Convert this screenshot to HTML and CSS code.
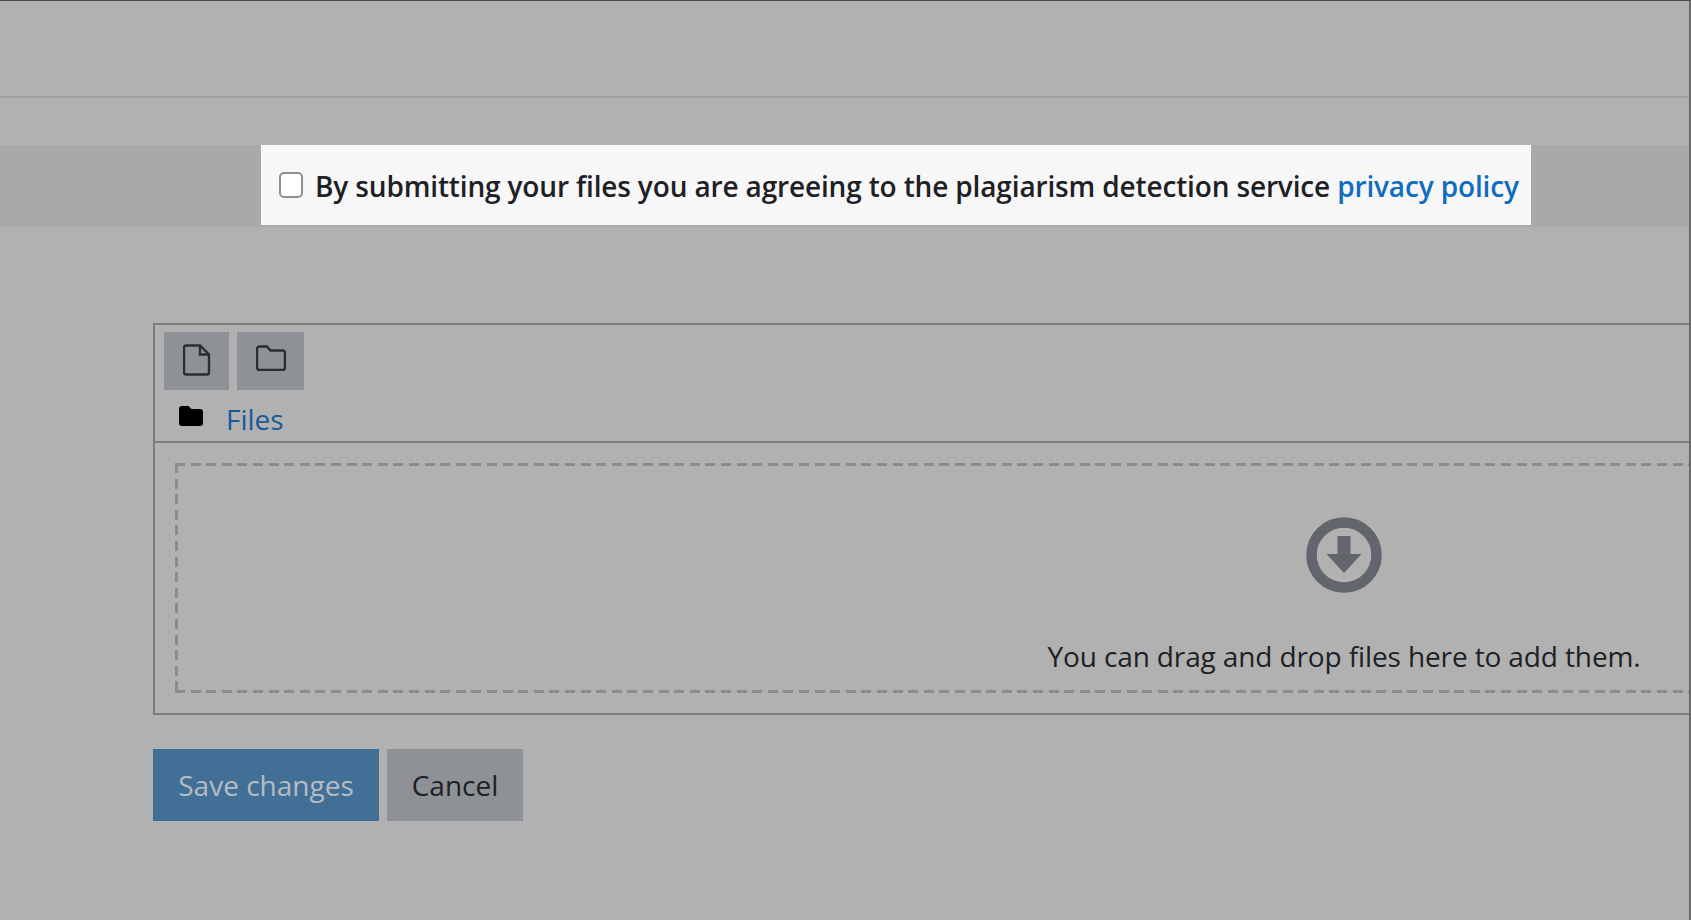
FILE: index.html
```html
<!DOCTYPE html>
<html lang="en">
<head>
<meta charset="utf-8">
<title>Submit assignment</title>
<link rel="stylesheet" href="styles.css">
</head>
<body>
<div class="page">
  <div class="topbar"></div>
  <div class="band">
    <label class="notice">
      <span class="checkbox"></span>
      <span class="notice-text">By submitting your files you are agreeing to the plagiarism detection service <a class="policy" href="#">privacy policy</a></span>
    </label>
  </div>
  <div class="form">
    <div class="manager">
      <div class="toolbar">
        <span class="tool tool-file">
          <svg class="file-icon" viewBox="0 0 28 32" width="28" height="32"><path d="M3 1.500h14l9 9v18a2 2 0 0 1-2 2H3a2 2 0 0 1-2-2v-25a2 2 0 0 1 2-2z" fill="none" stroke="#2a2d31" stroke-width="2.400"/><path d="M17 1.500v9h9" fill="none" stroke="#2a2d31" stroke-width="2.400"/></svg>
        </span>
        <span class="tool tool-folder">
          <svg class="folder-icon" viewBox="0 0 30 26" width="30" height="26"><path d="M3.500 1.500h7.500l3.500 4h12a2.500 2.500 0 0 1 2.500 2.500v14.500a2.500 2.500 0 0 1-2.500 2.500H3.500A2.500 2.500 0 0 1 1 22.500V4a2.500 2.500 0 0 1 2.500-2.500z" fill="none" stroke="#2a2d31" stroke-width="2.400"/></svg>
        </span>
      </div>
      <div class="path">
        <svg class="path-icon" viewBox="0 0 24 20" width="24" height="20"><path d="M3 0h6.500l3 3H21a3 3 0 0 1 3 3v11a3 3 0 0 1-3 3H3a3 3 0 0 1-3-3V3a3 3 0 0 1 3-3z" fill="#000"/></svg>
        <a class="path-link" href="#">Files</a>
      </div>
      <div class="drop-wrap">
        <div class="drop">
          <svg class="drop-icon" viewBox="0 0 76 76" width="76" height="76"><circle cx="38" cy="38" r="32.500" fill="none" stroke="#62656b" stroke-width="10.500"/><path d="M31.500 19h13v18h11L38 56 20.500 37h11z" fill="#62656b"/></svg>
          <div class="drop-text">You can drag and drop files here to add them.</div>
        </div>
      </div>
    </div>
    <div class="actions">
      <button class="btn btn-save">Save changes</button>
      <button class="btn btn-cancel">Cancel</button>
    </div>
  </div>
</div>
</body>
</html>
```

FILE: styles.css
```css
* { box-sizing: border-box; }
html, body { margin: 0; padding: 0; }
body {
  width: 1691px;
  height: 920px;
  overflow: hidden;
  background: #b1b1b1;
  font-family: "Open Sans", "Noto Sans", sans-serif;
  font-size: 28px;
  color: #1d2125;
}
.page {
  height: 920px;
  border-top: 1px solid #4a4a4a;
  border-right: 2px solid #6a6a6a;
  overflow: hidden;
}
.topbar {
  height: 97px;
  border-bottom: 2px solid #a3a3a3;
}
.band {
  margin-top: 47px;
  height: 82px;
  background: #a9a9a9;
  padding-left: 261px;
}
.notice {
  display: flex;
  align-items: center;
  width: 1270px;
  height: 80px;
  background: #f7f7f7;
  padding-left: 18px;
  font-weight: 600;
}
.checkbox {
  width: 24px;
  height: 26px;
  margin-right: 12px;
  border: 2px solid #8f8f8f;
  border-radius: 5px;
  background: #fff;
  flex: none;
}
.notice-text { white-space: nowrap; padding-top: 2px; letter-spacing: -0.15px; }
.policy { color: #0f6cbf; text-decoration: none; }
.form { padding-left: 153px; }
.manager {
  margin-top: 96px;
  width: 2382px;
  height: 392px;
  border: 2px solid #797c80;
}
.toolbar {
  display: flex;
  gap: 8px;
  padding: 7px 0 0 9px;
}
.tool {
  display: flex;
  align-items: center;
  justify-content: center;
  height: 58px;
  background: #8e9196;
}
.tool-file { width: 65px; }
.tool-folder { width: 67px; }
.file-icon { margin-top: -2px; }
.folder-icon { margin-top: -6px; }
.path {
  display: flex;
  align-items: center;
  height: 53px;
  padding-left: 24px;
  border-bottom: 2px solid #797c80;
}
.path-icon { flex: none; margin-right: 23px; }
.path-link { color: #1a5a97; text-decoration: none; padding-top: 7px; }
.drop-wrap { padding: 20px 20px 0; }
.drop {
  height: 230px;
  display: flex;
  flex-direction: column;
  align-items: center;
  padding-top: 54px;
  background-image:
    repeating-linear-gradient(to right, #8c8c8c 0 10px, transparent 10px 15.600px),
    repeating-linear-gradient(to right, #8c8c8c 0 10px, transparent 10px 15.600px),
    repeating-linear-gradient(to bottom, #8c8c8c 0 10px, transparent 10px 15.600px),
    repeating-linear-gradient(to bottom, #8c8c8c 0 10px, transparent 10px 15.600px);
  background-repeat: no-repeat;
  background-size: 100% 3px, 100% 3px, 3px 100%, 3px 100%;
  background-position: left top, left bottom, left top, right top;
}
.drop-icon { flex: none; }
.drop-text { margin-top: 44px; white-space: nowrap; letter-spacing: -0.12px; }
.actions {
  display: flex;
  gap: 8px;
  margin-top: 34px;
}
.btn {
  height: 72px;
  border: none;
  font: inherit;
  padding: 0;
}
.btn-save { width: 226px; background: #426f96; color: #b5bcc3; }
.btn-cancel { width: 136px; background: #8e9196; color: #1d2125; }
```
